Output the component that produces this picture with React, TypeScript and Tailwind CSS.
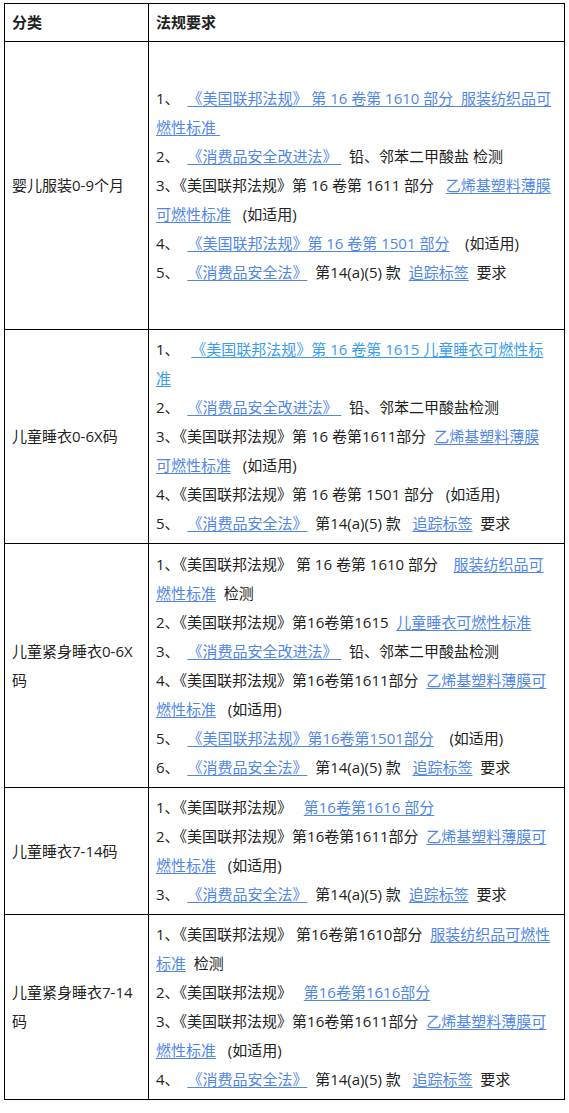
type Seg = { t: string; link?: boolean; alt?: boolean };

const L = (t: string, alt = false): Seg => ({ t, link: true, alt });
const T = (t: string): Seg => ({ t });

interface Row {
  name: string;
  height: string;
  items: Seg[][];
}

const rows: Row[] = [
  {
    name: "婴儿服装0-9个月",
    height: "h-[288px]",
    items: [
      [T("1、  "), L("《美国联邦法规》 第 16 卷第 1610 部分  服装纺织品可燃性标准 ")],
      [T("2、  "), L("《消费品安全改进法》 "), T("  铅、邻苯二甲酸盐 检测")],
      [T("3、《美国联邦法规》第 16 卷第 1611 部分   "), L("乙烯基塑料薄膜可燃性标准"), T("   (如适用)")],
      [T("4、  "), L("《美国联邦法规》第 16 卷第 1501 部分"), T("    (如适用)")],
      [T("5、  "), L("《消费品安全法》"), T("  第14(a)(5) 款  "), L("追踪标签"), T("  要求")],
    ],
  },
  {
    name: "儿童睡衣0-6X码",
    height: "h-[214px]",
    items: [
      [T("1、   "), L("《美国联邦法规》第 16 卷第 1615 儿童睡衣可燃性标准", true)],
      [T("2、  "), L("《消费品安全改进法》 "), T("  铅、邻苯二甲酸盐检测")],
      [T("3、《美国联邦法规》第 16 卷第1611部分  "), L("乙烯基塑料薄膜可燃性标准"), T("   (如适用)")],
      [T("4、《美国联邦法规》第 16 卷第 1501 部分   (如适用)")],
      [T("5、  "), L("《消费品安全法》"), T("  第14(a)(5) 款   "), L("追踪标签"), T("  要求")],
    ],
  },
  {
    name: "儿童紧身睡衣0-6X码",
    height: "h-[244px]",
    items: [
      [T("1、《美国联邦法规》 第 16 卷第 1610 部分    "), L("服装纺织品可燃性标准"), T("  检测")],
      [T("2、《美国联邦法规》第16卷第1615  "), L("儿童睡衣可燃性标准")],
      [T("3、  "), L("《消费品安全改进法》 "), T("  铅、邻苯二甲酸盐检测")],
      [T("4、《美国联邦法规》第16卷第1611部分  "), L("乙烯基塑料薄膜可燃性标准"), T("   (如适用)")],
      [T("5、  "), L("《美国联邦法规》第16卷第1501部分"), T("    (如适用)")],
      [T("6、  "), L("《消费品安全法》"), T("  第14(a)(5) 款   "), L("追踪标签"), T("  要求")],
    ],
  },
  {
    name: "儿童睡衣7-14码",
    height: "h-[126px]",
    items: [
      [T("1、《美国联邦法规》   "), L("第16卷第1616 部分")],
      [T("2、《美国联邦法规》第16卷第1611部分  "), L("乙烯基塑料薄膜可燃性标准"), T("   (如适用)")],
      [T("3、  "), L("《消费品安全法》"), T("  第14(a)(5) 款  "), L("追踪标签"), T("  要求")],
    ],
  },
  {
    name: "儿童紧身睡衣7-14码",
    height: "h-[185px]",
    items: [
      [T("1、《美国联邦法规》 第16卷第1610部分  "), L("服装纺织品可燃性标准"), T("  检测")],
      [T("2、《美国联邦法规》   "), L("第16卷第1616部分")],
      [T("3、《美国联邦法规》第16卷第1611部分  "), L("乙烯基塑料薄膜可燃性标准"), T("   (如适用)")],
      [T("4、  "), L("《消费品安全法》"), T("  第14(a)(5) 款   "), L("追踪标签"), T("  要求")],
    ],
  },
];

function Line({ segs }: { segs: Seg[] }) {
  return (
    <p className="whitespace-pre-wrap">
      {segs.map((s, i) =>
        s.link ? (
          <a
            key={i}
            href="#"
            className={`underline underline-offset-2 ${s.alt ? "text-[#3a9cf0]" : "text-[#4f86ea]"}`}
          >
            {s.t}
          </a>
        ) : (
          <span key={i}>{s.t}</span>
        )
      )}
    </p>
  );
}

export default function App() {
  return (
    <div className="min-h-screen bg-white pl-[4px] pt-[3px] text-[15px] leading-[29px] text-[#222] font-['Open_Sans','Noto_Sans_CJK_SC',sans-serif]">
      <table className="w-[561px] table-fixed border-collapse">
        <colgroup>
          <col className="w-[144px]" />
          <col />
        </colgroup>
        <thead>
          <tr className="h-[38px]">
            <th className="border border-black px-[7px] text-left align-middle font-semibold">分类</th>
            <th className="border border-black px-[7px] text-left align-middle font-semibold">法规要求</th>
          </tr>
        </thead>
        <tbody>
          {rows.map((r) => (
            <tr key={r.name} className={r.height}>
              <td className="border border-black px-[7px] align-middle">{r.name}</td>
              <td className="border border-black pl-[7px] pr-[10px] py-[5px] align-middle">
                {r.items.map((segs, i) => (
                  <Line key={i} segs={segs} />
                ))}
              </td>
            </tr>
          ))}
        </tbody>
      </table>
    </div>
  );
}
